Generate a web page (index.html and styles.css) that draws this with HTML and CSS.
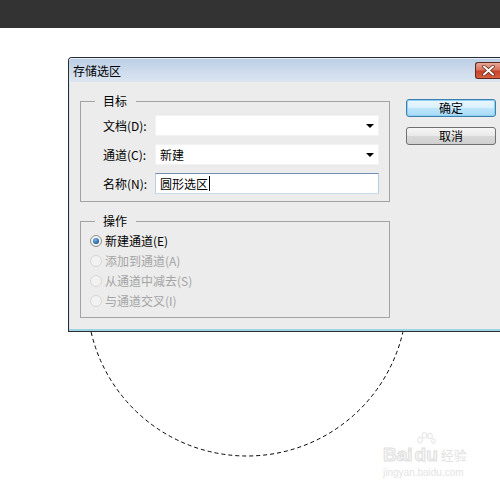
FILE: index.html
```html
<!DOCTYPE html>
<html>
<head>
<meta charset="utf-8">
<link rel="stylesheet" href="styles.css">
</head>
<body>
<div class="topbar"></div>
<div class="stage">
  <svg class="marquee" width="500" height="459" viewBox="0 0 500 459">
    <circle cx="247" cy="268" r="160" fill="none" stroke="#ffffff" stroke-width="1"/>
    <circle cx="247" cy="268" r="160" fill="none" stroke="#000000" stroke-width="1" stroke-dasharray="4 3"/>
  </svg>
  <div class="watermark">
    <div class="wm-top">
      <span class="wm-bai">Bai</span>
      <span class="wm-dugroup">
        <svg class="wm-paw" width="20" height="16" viewBox="0 0 20 16">
          <ellipse cx="4" cy="8" rx="2.3" ry="3" fill="none" stroke="#e2e2e2"/>
          <ellipse cx="8.5" cy="3.5" rx="2.3" ry="2.8" fill="none" stroke="#e2e2e2"/>
          <ellipse cx="14" cy="4" rx="2.3" ry="2.8" fill="none" stroke="#e2e2e2"/>
          <ellipse cx="17.5" cy="9" rx="1.8" ry="2.4" fill="none" stroke="#e2e2e2"/>
        </svg>
        <span class="wm-du">du</span>
      </span>
      <span class="wm-jy">经验</span>
    </div>
    <div class="wm-url">jingyan.baidu.com</div>
  </div>
  <div class="dialog">
    <div class="titlebar">
      <span class="title">存储选区</span>
      <span class="close">
        <svg width="13" height="11" viewBox="0 0 13 11">
          <path d="M2 1.5 L11 9.5 M11 1.5 L2 9.5" stroke="#5a2418" stroke-width="3.4" stroke-linecap="round"/>
          <path d="M2 1.5 L11 9.5 M11 1.5 L2 9.5" stroke="#ffffff" stroke-width="2" stroke-linecap="round"/>
        </svg>
      </span>
    </div>
    <div class="content">
      <div class="main">
        <fieldset class="group target">
          <legend>目标</legend>
          <div class="form">
            <span class="label">文档(D):</span>
            <div class="select"><span class="value"></span><span class="arrow"></span></div>
            <span class="label">通道(C):</span>
            <div class="select"><span class="value">新建</span><span class="arrow"></span></div>
            <span class="label">名称(N):</span>
            <div class="textbox"><span class="value">圆形选区</span><span class="caret"></span></div>
          </div>
        </fieldset>
        <fieldset class="group op">
          <legend>操作</legend>
          <div class="radios">
            <div class="radio-row"><span class="radio checked"><span class="dot"></span></span><span class="rtext">新建通道(E)</span></div>
            <div class="radio-row disabled"><span class="radio"></span><span class="rtext">添加到通道(A)</span></div>
            <div class="radio-row disabled"><span class="radio"></span><span class="rtext">从通道中减去(S)</span></div>
            <div class="radio-row disabled"><span class="radio"></span><span class="rtext">与通道交叉(I)</span></div>
          </div>
        </fieldset>
      </div>
      <div class="buttons">
        <div class="btn default">确定</div>
        <div class="btn">取消</div>
      </div>
    </div>
  </div>
</div>
</body>
</html>
```
FILE: styles.css
```css
* { box-sizing: border-box; }
html, body {
  margin: 0;
  padding: 0;
}
body {
  width: 500px;
  height: 487px;
  overflow: hidden;
  background: #ffffff;
  font-family: "Noto Sans CJK SC", "Microsoft YaHei", sans-serif;
  font-size: 12px;
  color: #000;
}
.topbar {
  height: 28px;
  background: #333333;
}
.stage {
  position: relative;
  height: 459px;
}
.marquee {
  position: absolute;
  left: 0;
  top: 0;
}
.watermark {
  position: absolute;
  left: 383px;
  top: 404px;
  font-family: "Liberation Sans", Arial, sans-serif;
}
.wm-top {
  display: flex;
  align-items: flex-end;
  height: 31px;
}
.wm-bai, .wm-du {
  font-size: 19px;
  font-weight: bold;
  line-height: 17px;
  color: #f7f7f7;
  -webkit-text-stroke: 1px #e0e0e0;
}
.wm-dugroup {
  display: flex;
  flex-direction: column;
  align-items: center;
  margin-left: 2px;
}
.wm-paw {
  display: block;
  margin-bottom: -2px;
}
.wm-jy {
  font-family: "Noto Sans CJK SC", sans-serif;
  font-size: 13px;
  line-height: 17px;
  margin-left: 3px;
  color: #e2e2e2;
}
.wm-url {
  font-size: 10px;
  line-height: 12px;
  margin-top: 4px;
  color: #e4e4e4;
}
.dialog {
  position: absolute;
  left: 68px;
  top: 29px;
  width: 432px;
  border: 1px solid #2a2f36;
  border-right: 0;
  border-radius: 4px 0 0 0;
  background: #ececec;
}
.titlebar {
  height: 24px;
  display: flex;
  align-items: flex-start;
  background: linear-gradient(#bccfe5, #d3dfee 70%, #dce6f1);
  border-top: 1px solid #e6eef7;
  border-radius: 3px 0 0 0;
}
.title {
  padding-left: 4px;
  line-height: 23px;
  font-size: 12px;
  color: #000;
}
.close {
  margin-left: auto;
  margin-top: 3px;
  width: 25px;
  height: 17px;
  border: 1px solid #5b2b22;
  border-right: 0;
  border-radius: 3px 0 0 3px;
  background: linear-gradient(#eba797, #d8745e 45%, #c6412a 55%, #d8603f);
  display: flex;
  align-items: center;
  padding-left: 6px;
}
.close svg { display: block; }
.content {
  display: flex;
  align-items: flex-start;
  gap: 16px;
  padding: 10px 0 11px 11px;
  border-bottom: 2px solid #9ed4e2;
  box-shadow: inset 1px 0 0 #cfe2ee;
}
.main {
  width: 310px;
  display: flex;
  flex-direction: column;
  gap: 10px;
}
.group {
  margin: 0;
  width: 310px;
  border: 1px solid #a3a3a3;
  padding: 0;
  min-width: 0;
}
.group legend {
  margin-left: 14px;
  padding: 0 9px 0 8px;
  line-height: 18px;
  height: 18px;
  font-size: 12px;
}
.target {
  padding: 5px 0 7px 0;
}
.form {
  padding-left: 22px;
  display: grid;
  grid-template-columns: 52px 224px;
  grid-auto-rows: 21px;
  row-gap: 8px;
  align-items: center;
}
.label {
  line-height: 21px;
  white-space: nowrap;
}
.select, .textbox {
  height: 21px;
  background: #ffffff;
  display: flex;
  align-items: center;
  padding-left: 4px;
  padding-right: 4px;
}
.select {
  border: 1px solid #f2f2f2;
}
.textbox {
  border: 1px solid;
  border-color: #6f8fae #b7cfe6 #c8dbed #b7cfe6;
}
.value {
  line-height: 19px;
}
.arrow {
  margin-left: auto;
  width: 0;
  height: 0;
  border-left: 4px solid transparent;
  border-right: 4px solid transparent;
  border-top: 4px solid #000;
  margin-top: 1px;
}
.caret {
  width: 1px;
  height: 15px;
  background: #000;
  margin-left: 1px;
}
.op {
  padding: 1px 0 6px 0;
}
.radios {
  padding-left: 9px;
  display: flex;
  flex-direction: column;
}
.radio-row {
  height: 20px;
  display: flex;
  align-items: center;
  gap: 3px;
}
.radio {
  width: 12px;
  height: 12px;
  border-radius: 50%;
  border: 1px solid #8f8f8f;
  background: radial-gradient(circle at 50% 40%, #ffffff, #e4e4e4);
  display: flex;
  align-items: center;
  justify-content: center;
}
.radio .dot {
  width: 6px;
  height: 6px;
  border-radius: 50%;
  background: radial-gradient(circle at 40% 35%, #7fb6ea, #1e5a99 70%, #173f6e);
}
.disabled .radio {
  border-color: #d6d6d6;
  background: #f2f2f2;
}
.rtext {
  line-height: 20px;
}
.disabled .rtext {
  color: #a4a4a4;
}
.buttons {
  margin-top: 7px;
  width: 90px;
  display: flex;
  flex-direction: column;
  gap: 10px;
}
.btn {
  height: 18px;
  border: 1px solid #707070;
  border-radius: 3px;
  background: linear-gradient(#f6f6f6, #e9e9e9 50%, #d9d9d9 51%, #cfcfcf);
  text-align: center;
  line-height: 16px;
  font-size: 12px;
}
.btn.default {
  border-color: #3c7fb1;
  background: linear-gradient(#eaf6fd, #d9f0fc 50%, #bee6fd 51%, #a7d9f5);
  box-shadow: inset 0 0 0 1px #8ed0ef;
}
```
